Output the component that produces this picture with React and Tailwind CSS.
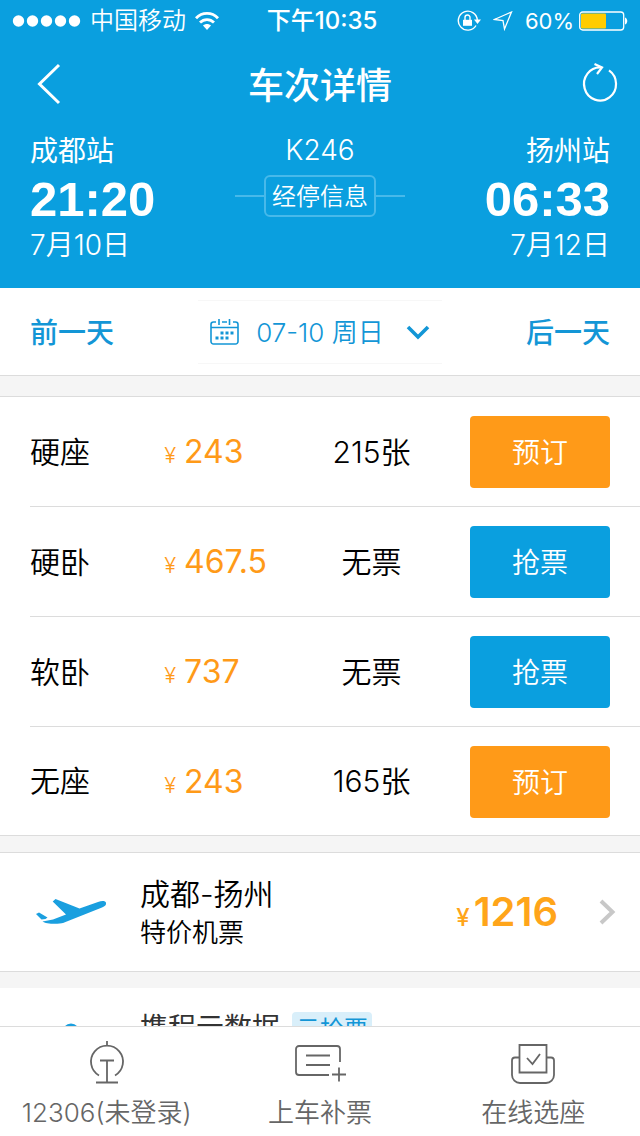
const seats = [
  { name: '硬座', price: '243', left: '215张', bookable: true },
  { name: '硬卧', price: '467.5', left: '无票', bookable: false },
  { name: '软卧', price: '737', left: '无票', bookable: false },
  { name: '无座', price: '243', left: '165张', bookable: true },
];

function StatusBar() {
  return (
    <div className="grid h-10 grid-cols-[1fr_auto_1fr] items-center px-3 pt-0.5 text-2xl leading-9">
      <div className="flex items-center">
        <svg width="70" height="12" viewBox="0 0 70 12" fill="currentColor">
          <circle cx="6.5" cy="6" r="5.7" />
          <circle cx="20.5" cy="6" r="5.7" />
          <circle cx="34.5" cy="6" r="5.7" />
          <circle cx="48.5" cy="6" r="5.7" />
          <circle cx="62.5" cy="6" r="5.7" />
        </svg>
        <span className="mx-2 font-[350]">中国移动</span>
        <svg width="26" height="20" viewBox="0 0 26 20" fill="none" stroke="currentColor" strokeWidth="2.8">
          <path d="M2 7.2C8 .8 18 .8 24 7.2" />
          <path d="M6 11.6c4-4 10-4 14 0" />
          <path d="M9 14.4c2.400-2 5.600-2 8 0L13 19z" fill="currentColor" stroke="none" />
        </svg>
      </div>
      <span className="pl-1 font-medium">下午10:35</span>
      <div className="flex items-center justify-end">
        <svg width="24" height="22" viewBox="0 0 24 22" fill="none" stroke="currentColor" strokeWidth="1.4">
          <path d="M19 15.500a9.500 9.500 0 1 1 1.300-5.500" />
          <path d="M17 9.500h7L20.500 14z" fill="currentColor" stroke="none" />
          <path d="M6 9.800h9v6H6z" fill="currentColor" stroke="none" />
          <path d="M8 10V7.500a2.500 2.500 0 0 1 5 0V10" />
        </svg>
        <svg className="ml-3" width="20" height="20" viewBox="0 0 20 20" fill="none" stroke="currentColor" strokeWidth="1.300">
          <path d="M18.500 1 1.500 8.500l8.500 1.200L11.500 18z" />
        </svg>
        <span className="ml-3 text-[22px]">60%</span>
        <svg className="ml-1" width="50" height="20" viewBox="0 0 50 20">
          <rect x="1.700" y="1" width="44" height="18" rx="3" fill="none" stroke="currentColor" strokeWidth="1.300" />
          <rect x="3" y="2.500" width="25" height="15" rx="1" fill="#ffcc00" />
          <path d="M47 6.500c3 1 3 6 0 7z" fill="currentColor" />
        </svg>
      </div>
    </div>
  );
}

function Header() {
  return (
    <header className="bg-[#0a9fdf] text-white">
      <StatusBar />
      <div className="grid h-[88px] grid-cols-[1fr_auto_1fr] items-center px-[21px]">
        <button type="button" aria-label="返回" className="w-14 pl-[15px]">
          <svg width="26" height="42" viewBox="0 0 26 42" fill="none" stroke="currentColor" strokeWidth="3">
            <path d="M23 2 3.500 21 23 40" />
          </svg>
        </button>
        <h1 className="pt-1 text-4xl font-medium">车次详情</h1>
        <button type="button" aria-label="刷新" className="justify-self-end">
          <svg width="38" height="42" viewBox="0 0 38 42" fill="none" stroke="currentColor" strokeWidth="2.200">
            <path d="M28 7.300A16 16.500 0 1 1 20 4.500" />
            <path d="M13.500 1l7.500 3.500-5 6.500" />
          </svg>
        </button>
      </div>
      <div className="grid h-40 grid-cols-[1fr_auto_1fr] px-[30px]">
        <div>
          <p className="pt-px text-[28px] leading-[44px]">成都站</p>
          <p className="font-['Liberation_Sans',sans-serif] text-[49px] font-bold leading-[52px]">21:20</p>
          <p className="text-[28px] font-[350] leading-10">7月10日</p>
        </div>
        <div className="flex flex-col items-center">
          <p className="text-[28px] font-light leading-[44px]">K246</p>
          <div className="mt-[3px] flex items-center">
            <span className="h-0.5 w-[29px] bg-[#47b9ea]" />
            <button type="button" className="h-[42px] rounded-md border-2 border-[#47b9ea] px-1.5 pt-0.5 text-2xl font-[350] leading-9">
              经停信息
            </button>
            <span className="h-0.5 w-[29px] bg-[#47b9ea]" />
          </div>
        </div>
        <div className="text-right">
          <p className="pt-px text-[28px] leading-[44px]">扬州站</p>
          <p className="font-['Liberation_Sans',sans-serif] text-[49px] font-bold leading-[52px]">06:33</p>
          <p className="text-[28px] font-[350] leading-10">7月12日</p>
        </div>
      </div>
    </header>
  );
}

function DateBar() {
  return (
    <div className="flex h-[88px] items-center justify-between border-b border-[#dcdcdc] bg-white px-[30px] text-[#1396d6]">
      <button type="button" className="pt-0.5 text-[28px] font-medium">前一天</button>
      <button type="button" className="flex h-16 items-center border-y border-[#f7f7f7] px-3 text-[26px] font-[350]">
        <svg width="30" height="28" viewBox="0 0 30 28" fill="none" stroke="currentColor" strokeWidth="1.600">
          <path d="M6 4H3.500A2.500 2.500 0 0 0 1 6.500v17A2.500 2.500 0 0 0 3.500 26h22a2.500 2.500 0 0 0 2.500-2.500v-17A2.500 2.500 0 0 0 25.500 4H23M12 4h5M1 9.500h27M9 1v6M19.500 1v6" />
          <path d="M10.500 15h13M5.500 20h13" strokeWidth="3" strokeDasharray="3 2" />
        </svg>
        <span className="ml-4 mr-[22px] pt-0.5">07-10 周日</span>
        <svg width="24" height="16" viewBox="0 0 24 16" fill="none" stroke="currentColor" strokeWidth="3.600">
          <path d="M2 3l10 10L22 3" />
        </svg>
      </button>
      <button type="button" className="pt-0.5 text-[28px] font-medium">后一天</button>
    </div>
  );
}

function SeatTable() {
  return (
    <section className="mt-5 border-y border-[#dcdcdc] bg-white pl-[30px]">
      <table className="w-full text-[30px]">
        <tbody>
          {seats.map((seat) => (
            <tr key={seat.name} className="h-[110px] border-b border-[#dcdcdc] first:h-[109px] last:h-[109px] last:border-b-0">
              <th scope="row" className="w-[22%] pt-0.5 text-left font-[350]">{seat.name}</th>
              <td className="w-[24%] pt-0.5 text-[32px] text-[#ff9a18]">
                <span className="mr-2 text-[22px] font-light">¥</span>
                {seat.price}
              </td>
              <td className="w-[20%] pt-0.5 text-center font-[350]">{seat.left}</td>
              <td className="pr-[30px] pt-0.5 text-right">
                {seat.bookable ? (
                  <button type="button" className="h-[72px] w-[140px] rounded bg-[#ff9a18] pt-0.5 text-[28px] font-[350] text-white">预订</button>
                ) : (
                  <button type="button" className="h-[72px] w-[140px] rounded bg-[#0a9fdf] pt-0.5 text-[28px] font-[350] text-white">抢票</button>
                )}
              </td>
            </tr>
          ))}
        </tbody>
      </table>
    </section>
  );
}

function FlightCard() {
  return (
    <a href="#flight" className="mt-4 flex h-[120px] items-center border-y border-[#dcdcdc] bg-white pl-9 pr-6">
      <svg width="72" height="28" viewBox="0 0 72 28" fill="#1a9fdf">
        <path d="M0 16l3-1.500 8.500 5-2 1.500-4 .5z" />
        <path d="M6.500 23.500L17 21.500l13-5L16.700 3.500 19.500 1 43.500 10.500 62 4c4-1.500 7.500-1.300 8 .8s-1 3.700-4 4.700L27 25c-3 1-17 1.500-20.500-1.500z" />
      </svg>
      <div className="ml-8 flex-1 pt-0.5 font-[350]">
        <p className="text-[30px] leading-10">成都-扬州</p>
        <p className="text-[26px] leading-[38px]">特价机票</p>
      </div>
      <p className="text-[40px] font-semibold text-[#ffa51a]">
        <span className="mr-1 text-2xl font-medium">¥</span>
        1216
      </p>
      <svg className="ml-10" width="18" height="26" viewBox="0 0 18 26" fill="none" stroke="#c8c8c8" strokeWidth="4">
        <path d="M3 2l11.500 11L3 24" />
      </svg>
    </a>
  );
}

function CloudCard() {
  return (
    <div className="mt-4 flex h-[120px] bg-white pl-9 pt-[18px]">
      <svg className="mt-3" width="72" height="44" viewBox="0 0 72 44" fill="none" stroke="#1a9fdf" strokeWidth="3">
        <path d="M29 11a6.500 6.500 0 0 1 12 0M30 11C20 11 14 16 14 24s6 14 14 14h22c12 0 12-18 0-18" />
      </svg>
      <p className="ml-8 text-[28px] leading-[44px] text-[#333]">携程云数据</p>
      <span className="ml-3 mt-1.5 h-9 rounded bg-[#d9effa] px-1 text-2xl leading-9 text-[#1396d6]">云抢票</span>
    </div>
  );
}

function BottomNav() {
  return (
    <nav className="grid h-[110px] shrink-0 grid-cols-3 border-t border-[#dcdcdc] bg-white text-[26px] font-[350] text-[#666]">
      <a href="#account" className="flex flex-col items-center pt-3.5">
        <svg width="44" height="44" viewBox="0 0 44 44" fill="none" stroke="#666" strokeWidth="1.800">
          <path d="M14 34.500A16 16 0 1 1 30 34.500M22 0v5M15 19.500h14M22 19.500v21M11 41.500h22" />
        </svg>
        <span className="mt-2.5 leading-9">12306(未登录)</span>
      </a>
      <a href="#onboard" className="flex flex-col items-center pt-3.5">
        <svg width="52" height="44" viewBox="0 0 52 44" fill="none" stroke="#666" strokeWidth="1.800">
          <path d="M46 21V8a3 3 0 0 0-3-3H5a3 3 0 0 0-3 3v23a3 3 0 0 0 3 3h30M12 14.500h24M12 24h24M38 33.500h14M45 26.500v14" />
        </svg>
        <span className="mt-2.5 leading-9">上车补票</span>
      </a>
      <a href="#seat" className="flex flex-col items-center pt-3.5">
        <svg width="46" height="44" viewBox="0 0 46 44" fill="none" stroke="#666" strokeWidth="1.800">
          <path d="M9.500 4h27v27.500h-27zM9.500 16.500H5a3 3 0 0 0-3 3V34a8 8 0 0 0 8 8h26a8 8 0 0 0 8-8V19.500a3 3 0 0 0-3-3h-4.500M17 17l5.500 6 7.500-10" />
        </svg>
        <span className="mt-2.5 leading-9">在线选座</span>
      </a>
    </nav>
  );
}

export default function App() {
  return (
    <div className="flex h-screen flex-col bg-[#f5f5f5] font-['Inter','Noto_Sans_CJK_SC',sans-serif] text-black">
      <div className="min-h-0 flex-1 overflow-hidden">
        <Header />
        <main>
          <DateBar />
          <SeatTable />
          <FlightCard />
          <CloudCard />
        </main>
      </div>
      <BottomNav />
    </div>
  );
}
